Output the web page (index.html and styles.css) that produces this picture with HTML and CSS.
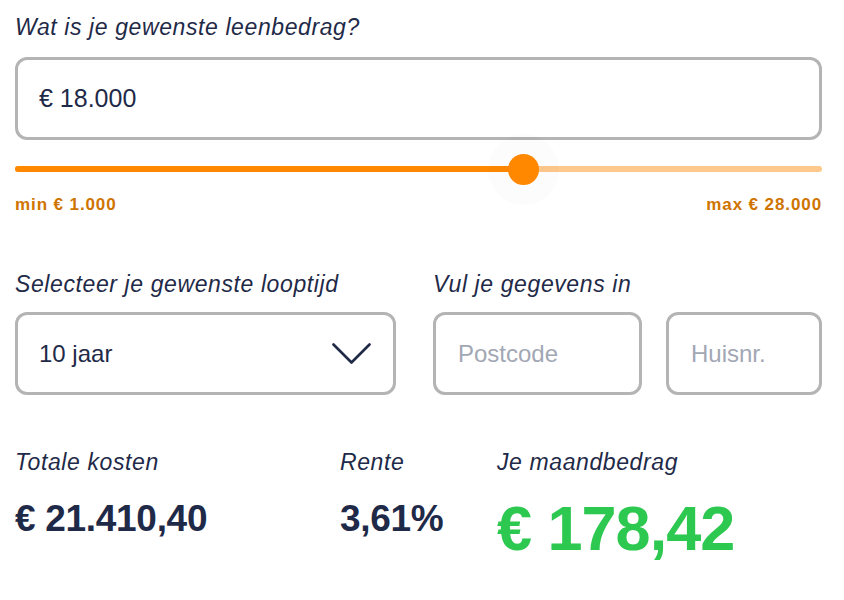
FILE: index.html
```html
<!DOCTYPE html>
<html lang="nl">
<head>
<meta charset="utf-8">
<title>Leenbedrag</title>
<link rel="stylesheet" href="styles.css">
</head>
<body>
<main class="calc">
  <label class="label label-first" for="amount">Wat is je gewenste leenbedrag?</label>
  <input class="field field-amount" id="amount" type="text" value="€ 18.000">

  <div class="slider">
    <div class="track">
      <div class="fill" style="width: 62.96%"></div>
      <div class="thumb" style="left: 62.96%"></div>
    </div>
  </div>
  <div class="range">
    <span>min € 1.000</span>
    <span>max € 28.000</span>
  </div>

  <div class="row">
    <div class="col">
      <div class="label">Selecteer je gewenste looptijd</div>
      <div class="field field-select">
        <span>10 jaar</span>
        <svg class="chevron" width="39" height="22" viewBox="0 0 39 22" aria-hidden="true">
          <polyline points="1.5,1.5 19.5,19.5 37.5,1.5" fill="none" stroke="#1f2a48" stroke-width="2.6" stroke-linecap="round" stroke-linejoin="round"/>
        </svg>
      </div>
    </div>
    <div class="col">
      <div class="label">Vul je gegevens in</div>
      <div class="address">
        <input class="field field-post" type="text" placeholder="Postcode">
        <input class="field field-nr" type="text" placeholder="Huisnr.">
      </div>
    </div>
  </div>

  <div class="results">
    <div class="result">
      <div class="label">Totale kosten</div>
      <div class="value">€ 21.410,40</div>
    </div>
    <div class="result">
      <div class="label">Rente</div>
      <div class="value">3,61%</div>
    </div>
    <div class="result">
      <div class="label">Je maandbedrag</div>
      <div class="value value-big">€ 178,42</div>
    </div>
  </div>
</main>
</body>
</html>
```

FILE: styles.css
```css
* { box-sizing: border-box; }

html, body {
  margin: 0;
  padding: 0;
  background: #ffffff;
}

body {
  font-family: "Liberation Sans", Arial, sans-serif;
  color: #1f2a48;
}

.calc {
  width: 807px;
  margin-left: 15px;
  padding-top: 13px;
  display: flex;
  flex-direction: column;
}

.label {
  display: block;
  font-style: italic;
  font-size: 23px;
  line-height: 28px;
  letter-spacing: 0.6px;
  color: #1f2a48;
  white-space: nowrap;
}

.field {
  display: block;
  height: 83px;
  border: 3px solid #b4b4b4;
  border-radius: 12px;
  background: #fff;
  font-family: "Liberation Sans", Arial, sans-serif;
  font-size: 24px;
  color: #1f2a48;
  padding: 0 0 0 21px;
  outline: none;
  margin: 0;
}

.field::placeholder {
  color: #a2a7b4;
  opacity: 1;
}

.field-amount {
  width: 100%;
  margin-top: 16px;
  font-size: 25px;
}

.slider {
  margin-top: 13px;
  height: 32px;
  display: flex;
  align-items: center;
}

.track {
  position: relative;
  width: 100%;
  height: 6px;
  border-radius: 3px;
  background: #ffc98c;
}

.fill {
  height: 100%;
  border-radius: 3px;
  background: #ff8800;
}

.thumb {
  position: absolute;
  top: 50%;
  width: 31px;
  height: 31px;
  margin: -15.5px 0 0 -15.5px;
  border-radius: 50%;
  background: #ff8800;
  box-shadow: 0 0 0 20px rgba(0, 0, 0, 0.012);
}

.range {
  margin-top: 10px;
  display: flex;
  justify-content: space-between;
  font-size: 17px;
  line-height: 20px;
  font-weight: 700;
  letter-spacing: 0.9px;
  color: #cf7400;
}

.row {
  margin-top: 55px;
  display: grid;
  grid-template-columns: 381px 1fr;
  column-gap: 37px;
}

.col .field {
  margin-top: 14px;
}

.field-select {
  display: flex;
  align-items: center;
  justify-content: space-between;
  padding-right: 22px;
}

.address {
  display: grid;
  grid-template-columns: 209px 1fr;
  column-gap: 24px;
}

.field-post,
.field-nr {
  width: 100%;
  padding-left: 22px;
}

.results {
  margin-top: 53px;
  display: grid;
  grid-template-columns: 325px 157px 1fr;
}

.value {
  margin-top: 21px;
  font-weight: 700;
  font-size: 37px;
  line-height: 44px;
  letter-spacing: -0.3px;
  color: #1f2a48;
  white-space: nowrap;
}

.value-big {
  margin-top: 17px;
  font-size: 63px;
  line-height: 70px;
  letter-spacing: -1px;
  color: #2dc84f;
}
```
